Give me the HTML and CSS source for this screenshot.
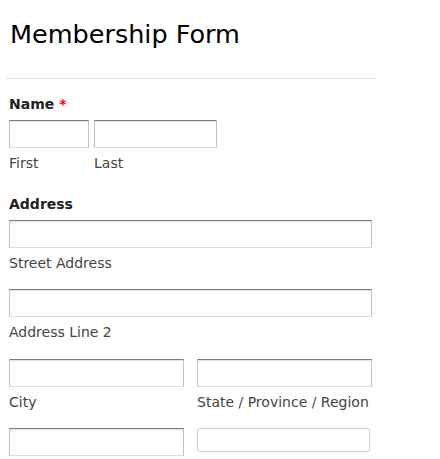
FILE: index.html
```html
<!DOCTYPE html>
<html>
<head>
<meta charset="utf-8">
<link rel="stylesheet" href="styles.css">
</head>
<body>
<div class="form">
  <header class="info">
    <h1 class="title">Membership Form</h1>
  </header>
  <div class="fields">
    <div class="field">
      <div class="label">Name <span class="req">*</span></div>
      <div class="row gap5">
        <div class="col">
          <input class="text w80" type="text">
          <span class="sub">First</span>
        </div>
        <div class="col">
          <input class="text w123" type="text">
          <span class="sub">Last</span>
        </div>
      </div>
    </div>
    <div class="field">
      <div class="label">Address</div>
      <div class="col line">
        <input class="text full" type="text">
        <span class="sub">Street Address</span>
      </div>
      <div class="col line">
        <input class="text full" type="text">
        <span class="sub">Address Line 2</span>
      </div>
      <div class="row gap13 line wide">
        <div class="col">
          <input class="text half" type="text">
          <span class="sub">City</span>
        </div>
        <div class="col">
          <input class="text half" type="text">
          <span class="sub">State / Province / Region</span>
        </div>
      </div>
      <div class="row gap13 line">
        <div class="col">
          <input class="text half" type="text">
        </div>
        <div class="col">
          <div class="select"></div>
        </div>
      </div>
    </div>
  </div>
</div>
</body>
</html>
```
FILE: styles.css
```css
html, body {
  margin: 0;
  padding: 0;
  background: #fff;
}
body {
  font-family: "DejaVu Sans", "Liberation Sans", sans-serif;
  overflow: hidden;
}
.form {
  width: 368px;
  margin-left: 7px;
}
.info {
  padding-top: 19px;
  padding-bottom: 29px;
  border-bottom: 1px dotted #c8c8c8;
}
.title {
  margin: 0 0 0 3px;
  font-size: 25.5px;
  line-height: 30px;
  font-weight: normal;
  color: #000;
}
.fields {
  padding-left: 2px;
}
.field {
  margin-top: 17px;
}
.field + .field {
  margin-top: 24px;
}
.label {
  font-size: 14px;
  line-height: 17px;
  font-weight: bold;
  color: #222;
  margin-bottom: 7px;
}
.req {
  color: #f00;
}
.row {
  display: flex;
}
.gap5 { gap: 5px; }
.gap13 { gap: 13px; }
.col {
  display: flex;
  flex-direction: column;
}
.line + .line {
  margin-top: 17px;
}
.line + .line.wide {
  margin-top: 18px;
}
.text {
  box-sizing: border-box;
  height: 28px;
  margin: 0;
  padding: 0;
  background: #fff;
  border-top: 1px solid #7c7c7c;
  border-left: 1px solid #c3c3c3;
  border-right: 1px solid #c3c3c3;
  border-bottom: 1px solid #dddddd;
  box-shadow: inset 0 1px 1px rgba(0,0,0,0.12);
  outline: none;
}
.w80 { width: 80px; }
.w123 { width: 123px; }
.full { width: 363px; }
.half { width: 175px; }
.select {
  box-sizing: border-box;
  width: 173px;
  height: 24px;
  border: 1px solid #d0d0d0;
  border-radius: 2px;
  background: #fff;
}
.sub {
  padding-top: 7px;
  font-size: 14px;
  line-height: 17px;
  color: #444;
}
```
